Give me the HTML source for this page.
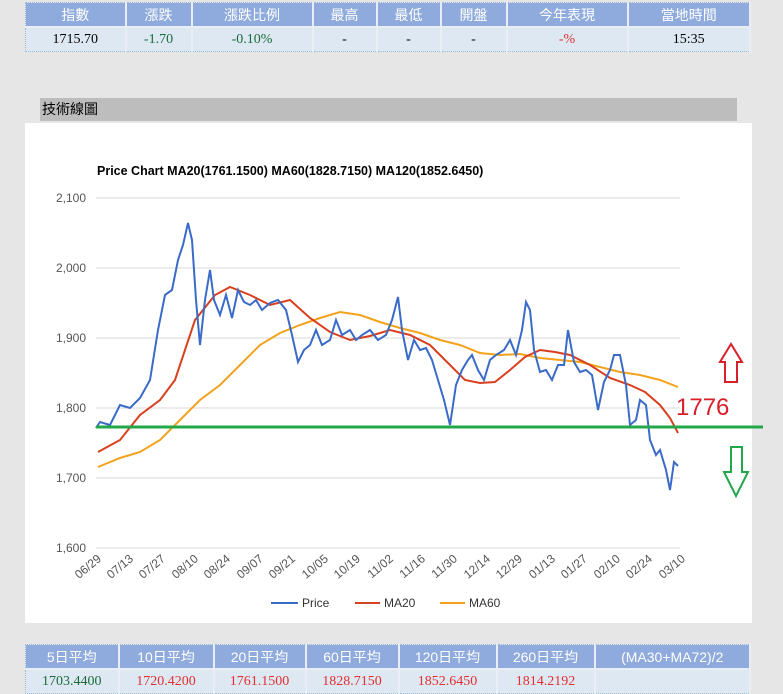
<!DOCTYPE html><html><head><meta charset="utf-8"><style>
body{margin:0;background:#e6e6e6;width:783px;height:693px;overflow:hidden;position:relative;font-family:"Liberation Serif","Noto Serif CJK SC","Noto Sans CJK TC",serif}
table{border-collapse:collapse;position:absolute;left:25px;width:726px;table-layout:fixed;border:1px dotted #9bbbd8}
td,th{text-align:center;font-size:14px;padding:0;border-right:2px solid #e9eef6}
th{background:#8faadc;color:#fff;font-weight:normal;height:23px;font-family:"Liberation Sans","Noto Sans CJK TC",sans-serif}
td{background:#dde8f3;height:23px;border-top:2px solid #e9eef6}
.g{color:#1b6b3a}.r{color:#e03030}
</style></head><body>
<table style="top:2px">
<col style="width:100px"><col style="width:66px"><col style="width:121px"><col style="width:64px"><col style="width:64px"><col style="width:66px"><col style="width:121px"><col>
<tr><th>指數</th><th>漲跌</th><th>漲跌比例</th><th>最高</th><th>最低</th><th>開盤</th><th>今年表現</th><th>當地時間</th></tr>
<tr><td>1715.70</td><td class="g">-1.70</td><td class="g">-0.10%</td><td>-</td><td>-</td><td>-</td><td class="r">-%</td><td>15:35</td></tr></table>
<div style="position:absolute;left:40px;top:98px;width:697px;height:23px;background:#bdbdbd;font:14px 'Liberation Sans','Noto Sans CJK TC',sans-serif;line-height:23px;padding-left:2px;box-sizing:border-box">技術線圖</div>
<div style="position:absolute;left:25px;top:123px;width:727px;height:500px;background:#fff"></div>
<svg style="position:absolute;left:0;top:0" width="783" height="693" font-family="Liberation Sans,sans-serif">
<text x="97" y="175" font-size="12.5" font-weight="bold">Price Chart MA20(1761.1500) MA60(1828.7150) MA120(1852.6450)</text>
<g stroke="#d9d9d9"><line x1="96" x2="680" y1="198" y2="198"/><line x1="96" x2="680" y1="268" y2="268"/><line x1="96" x2="680" y1="338" y2="338"/><line x1="96" x2="680" y1="408" y2="408"/><line x1="96" x2="680" y1="478" y2="478"/><line x1="96" x2="680" y1="548" y2="548"/></g>
<g font-size="12" fill="#555" text-anchor="end"><text x="86" y="202">2,100</text><text x="86" y="272">2,000</text><text x="86" y="342">1,900</text><text x="86" y="412">1,800</text><text x="86" y="482">1,700</text><text x="86" y="552">1,600</text></g>
<g font-size="12" fill="#555" text-anchor="end">
<text transform="translate(102,560) rotate(-40)">06/29</text><text transform="translate(134,560) rotate(-40)">07/13</text><text transform="translate(166,560) rotate(-40)">07/27</text><text transform="translate(199,560) rotate(-40)">08/10</text><text transform="translate(231,560) rotate(-40)">08/24</text><text transform="translate(264,560) rotate(-40)">09/07</text><text transform="translate(296,560) rotate(-40)">09/21</text><text transform="translate(329,560) rotate(-40)">10/05</text><text transform="translate(361,560) rotate(-40)">10/19</text><text transform="translate(394,560) rotate(-40)">11/02</text><text transform="translate(426,560) rotate(-40)">11/16</text><text transform="translate(458,560) rotate(-40)">11/30</text><text transform="translate(491,560) rotate(-40)">12/14</text><text transform="translate(523,560) rotate(-40)">12/29</text><text transform="translate(556,560) rotate(-40)">01/13</text><text transform="translate(588,560) rotate(-40)">01/27</text><text transform="translate(621,560) rotate(-40)">02/10</text><text transform="translate(653,560) rotate(-40)">02/24</text><text transform="translate(686,560) rotate(-40)">03/10</text></g>
<polyline fill="none" stroke="#f2a21b" stroke-width="2" points="98,467 120,458 140,452 160,440 180,420 200,400 220,385 240,365 260,345 280,333 300,325 320,318 340,312 360,315 380,322 400,328 420,333 440,340 460,345 480,353 500,355 520,354 540,358 560,360 580,362 600,367 620,372 640,375 660,380 678,387"/>
<polyline fill="none" stroke="#d8401f" stroke-width="2" points="98,452 120,440 140,415 160,400 175,380 195,320 215,295 230,287 250,295 270,305 290,300 310,318 330,332 350,340 370,336 390,330 410,335 430,345 450,365 465,380 480,383 495,382 510,370 525,357 540,350 555,352 570,355 590,365 610,378 630,385 645,392 660,405 670,418 678,433"/>
<polyline fill="none" stroke="#3a6bc8" stroke-width="2" points="96,428 100,422 110,425 120,405 130,408 140,398 150,380 158,330 165,295 172,290 178,260 183,245 188,223 192,240 196,300 200,345 205,300 210,270 214,300 220,315 226,295 232,318 238,290 244,302 250,305 256,300 262,310 270,303 278,300 286,310 292,335 298,362 304,350 310,345 316,330 322,345 330,340 336,320 342,335 350,330 356,340 362,335 370,330 378,340 386,335 392,320 398,297 402,330 408,360 414,340 420,350 426,348 432,360 438,380 444,400 450,425 456,385 462,370 468,360 472,355 478,370 484,380 490,360 496,355 504,350 510,340 516,355 522,330 526,302 530,310 534,350 540,372 546,370 552,380 558,365 564,365 568,330 574,362 580,372 586,370 592,375 598,410 604,382 610,370 614,355 620,355 626,385 630,425 636,420 640,400 646,405 650,440 656,455 660,450 666,470 670,490 674,462 678,466"/>
<line x1="96" x2="763" y1="427" y2="427" stroke="#22a84a" stroke-width="3"/>
<text x="676" y="415" font-size="24" fill="#d8202a">1776</text>
<polygon points="731,344 742,362 737,362 737,382 725,382 725,362 720,362" fill="none" stroke="#d8202a" stroke-width="2"/>
<polygon points="731,447 742,447 742,472 748,472 736,496 724,472 731,472" fill="none" stroke="#22a84a" stroke-width="2"/>
<g font-size="12" fill="#333"><line x1="271" x2="298" y1="603" y2="603" stroke="#3a6bc8" stroke-width="2"/><text x="302" y="607">Price</text>
<line x1="355" x2="380" y1="603" y2="603" stroke="#d8401f" stroke-width="2"/><text x="384" y="607">MA20</text>
<line x1="440" x2="465" y1="603" y2="603" stroke="#f2a21b" stroke-width="2"/><text x="469" y="607">MA60</text></g>
</svg>
<table style="top:644px">
<col style="width:93px"><col style="width:95px"><col style="width:92px"><col style="width:93px"><col style="width:98px"><col style="width:98px"><col>
<tr><th>5日平均</th><th>10日平均</th><th>20日平均</th><th>60日平均</th><th>120日平均</th><th>260日平均</th><th>(MA30+MA72)/2</th></tr>
<tr><td class="g">1703.4400</td><td class="r">1720.4200</td><td class="r">1761.1500</td><td class="r">1828.7150</td><td class="r">1852.6450</td><td class="r">1814.2192</td><td></td></tr></table>
</body></html>
